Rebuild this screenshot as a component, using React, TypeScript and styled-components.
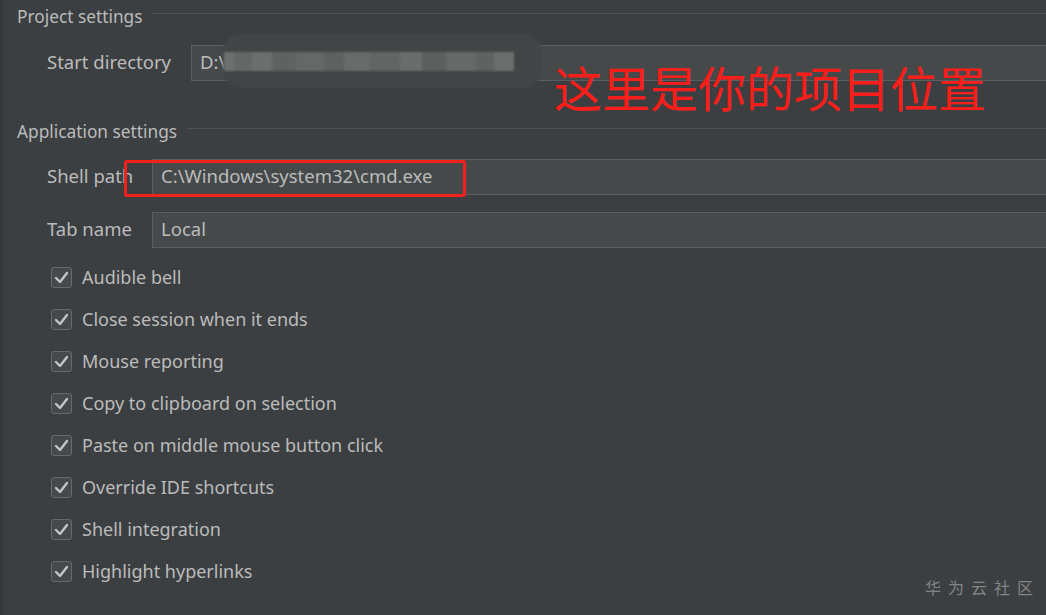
import React from "react";
import styled, { createGlobalStyle } from "styled-components";

const Global = createGlobalStyle`
  html, body { margin: 0; padding: 0; background: #3c3f41; overflow: hidden; }
  * { box-sizing: border-box; }
`;

const Root = styled.div`
  position: relative;
  width: 1046px;
  height: 615px;
  background: #3c3f41;
  border-left: 3px solid #35383a;
  font-family: "Noto Sans", "Open Sans", sans-serif;
  font-size: 18.5px;
  color: #bbbbbb;
  overflow: hidden;
  padding: 3px 0 0 14px;
  display: flex;
  flex-direction: column;
`;

const SectionHead = styled.div<{ $mt?: number }>`
  display: flex;
  align-items: center;
  gap: 10px;
  height: 28px;
  margin-top: ${(p) => p.$mt ?? 0}px;
`;

const SectionTitle = styled.span`
  white-space: nowrap;
  line-height: 28px;
  font-size: 17.3px;
`;

const SectionLine = styled.div`
  flex: 1;
  height: 1px;
  background: #4f5254;
  margin-top: -7px;
`;

const FieldRow = styled.div<{ $labelW: number; $mt: number }>`
  position: relative;
  display: grid;
  grid-template-columns: ${(p) => p.$labelW}px 1fr;
  align-items: center;
  margin-top: ${(p) => p.$mt}px;
  padding-left: 30px;
  margin-right: -4px;
`;

const Label = styled.span`
  white-space: nowrap;
  padding-bottom: 3px;
`;

const Field = styled.div`
  height: 36px;
  border: 1px solid #5b5e60;
  border-right: none;
  background: #45494a;
  display: flex;
  align-items: center;
  padding: 0 0 3px 8px;
  color: #bbbbbb;
  white-space: nowrap;
`;

const BlurPatch = styled.div`
  position: absolute;
  left: 206px;
  top: -11px;
  width: 318px;
  height: 54px;
  border-radius: 18px;
  background: #424546;
  filter: blur(1px);
  display: flex;
  align-items: center;
  padding-left: 1px;
`;

const Pixels = styled.div`
  display: flex;
  height: 19px;
`;

const Pix = styled.div<{ $c: string; $w: number }>`
  width: ${(p) => p.$w}px;
  height: 100%;
  background: ${(p) => p.$c};
`;

const RedBox = styled.div`
  position: absolute;
  left: 107px;
  top: 1px;
  width: 342px;
  height: 37px;
  border: 3px solid #f4201c;
  border-radius: 3px;
  pointer-events: none;
`;

const Annotation = styled.div`
  position: absolute;
  left: 551px;
  top: 54px;
  color: #fa1e1a;
  font-family: "Noto Sans CJK SC", sans-serif;
  font-size: 48px;
  letter-spacing: 0px;
  line-height: 64px;
  white-space: nowrap;
`;

const Checks = styled.div`
  display: flex;
  flex-direction: column;
  gap: 21px;
  margin-top: 19px;
  padding-left: 34px;
  font-size: 18px;
`;

const CheckRow = styled.label`
  display: flex;
  align-items: center;
  gap: 10px;
  height: 21px;
  white-space: nowrap;
  line-height: 21px;
`;

const Box = styled.span`
  width: 21px;
  height: 21px;
  border: 1px solid #676a6c;
  border-radius: 3px;
  background: #45494b;
  display: flex;
  align-items: center;
  justify-content: center;
`;

const Watermark = styled.div`
  position: absolute;
  right: 6px;
  bottom: 16px;
  color: #828485;
  font-family: "Noto Sans CJK SC", sans-serif;
  font-size: 16px;
  letter-spacing: 7px;
`;

const Check = () => (
  <Box>
    <svg width="15" height="13" viewBox="0 0 15 13">
      <path d="M2 7 L6 11 L13 2" fill="none" stroke="#c4c4c4" strokeWidth="2.4" strokeLinecap="round" strokeLinejoin="round" />
    </svg>
  </Box>
);

const pixels: [string, number][] = [
  ["#6e7170", 10], ["#646766", 18], ["#6c6f6e", 20], ["#5f6261", 24], ["#656867", 28],
  ["#5e6160", 20], ["#686b6a", 26], ["#626564", 30], ["#6a6d6c", 22], ["#5c5f5e", 24],
  ["#666968", 30], ["#5f6261", 18], ["#6b6e6d", 20],
];

const options = [
  "Audible bell",
  "Close session when it ends",
  "Mouse reporting",
  "Copy to clipboard on selection",
  "Paste on middle mouse button click",
  "Override IDE shortcuts",
  "Shell integration",
  "Highlight hyperlinks",
];

export default function App() {
  return (
    <>
      <Global />
      <Root>
        <SectionHead>
          <SectionTitle>Project settings</SectionTitle>
          <SectionLine />
        </SectionHead>
        <FieldRow $labelW={144} $mt={14}>
          <Label>Start directory</Label>
          <Field>D:\</Field>
          <BlurPatch>
            <Pixels>
              {pixels.map(([c, w], i) => (
                <Pix key={i} $c={c} $w={w} />
              ))}
            </Pixels>
          </BlurPatch>
        </FieldRow>
        <SectionHead $mt={37}>
          <SectionTitle>Application settings</SectionTitle>
          <SectionLine />
        </SectionHead>
        <FieldRow $labelW={105} $mt={13}>
          <Label>Shell path</Label>
          <Field>C:\Windows\system32\cmd.exe</Field>
          <RedBox />
        </FieldRow>
        <FieldRow $labelW={105} $mt={17}>
          <Label>Tab name</Label>
          <Field>Local</Field>
        </FieldRow>
        <Checks>
          {options.map((o) => (
            <CheckRow key={o}>
              <Check />
              {o}
            </CheckRow>
          ))}
        </Checks>
        <Annotation>这里是你的项目位置</Annotation>
        <Watermark>华为云社区</Watermark>
      </Root>
    </>
  );
}
